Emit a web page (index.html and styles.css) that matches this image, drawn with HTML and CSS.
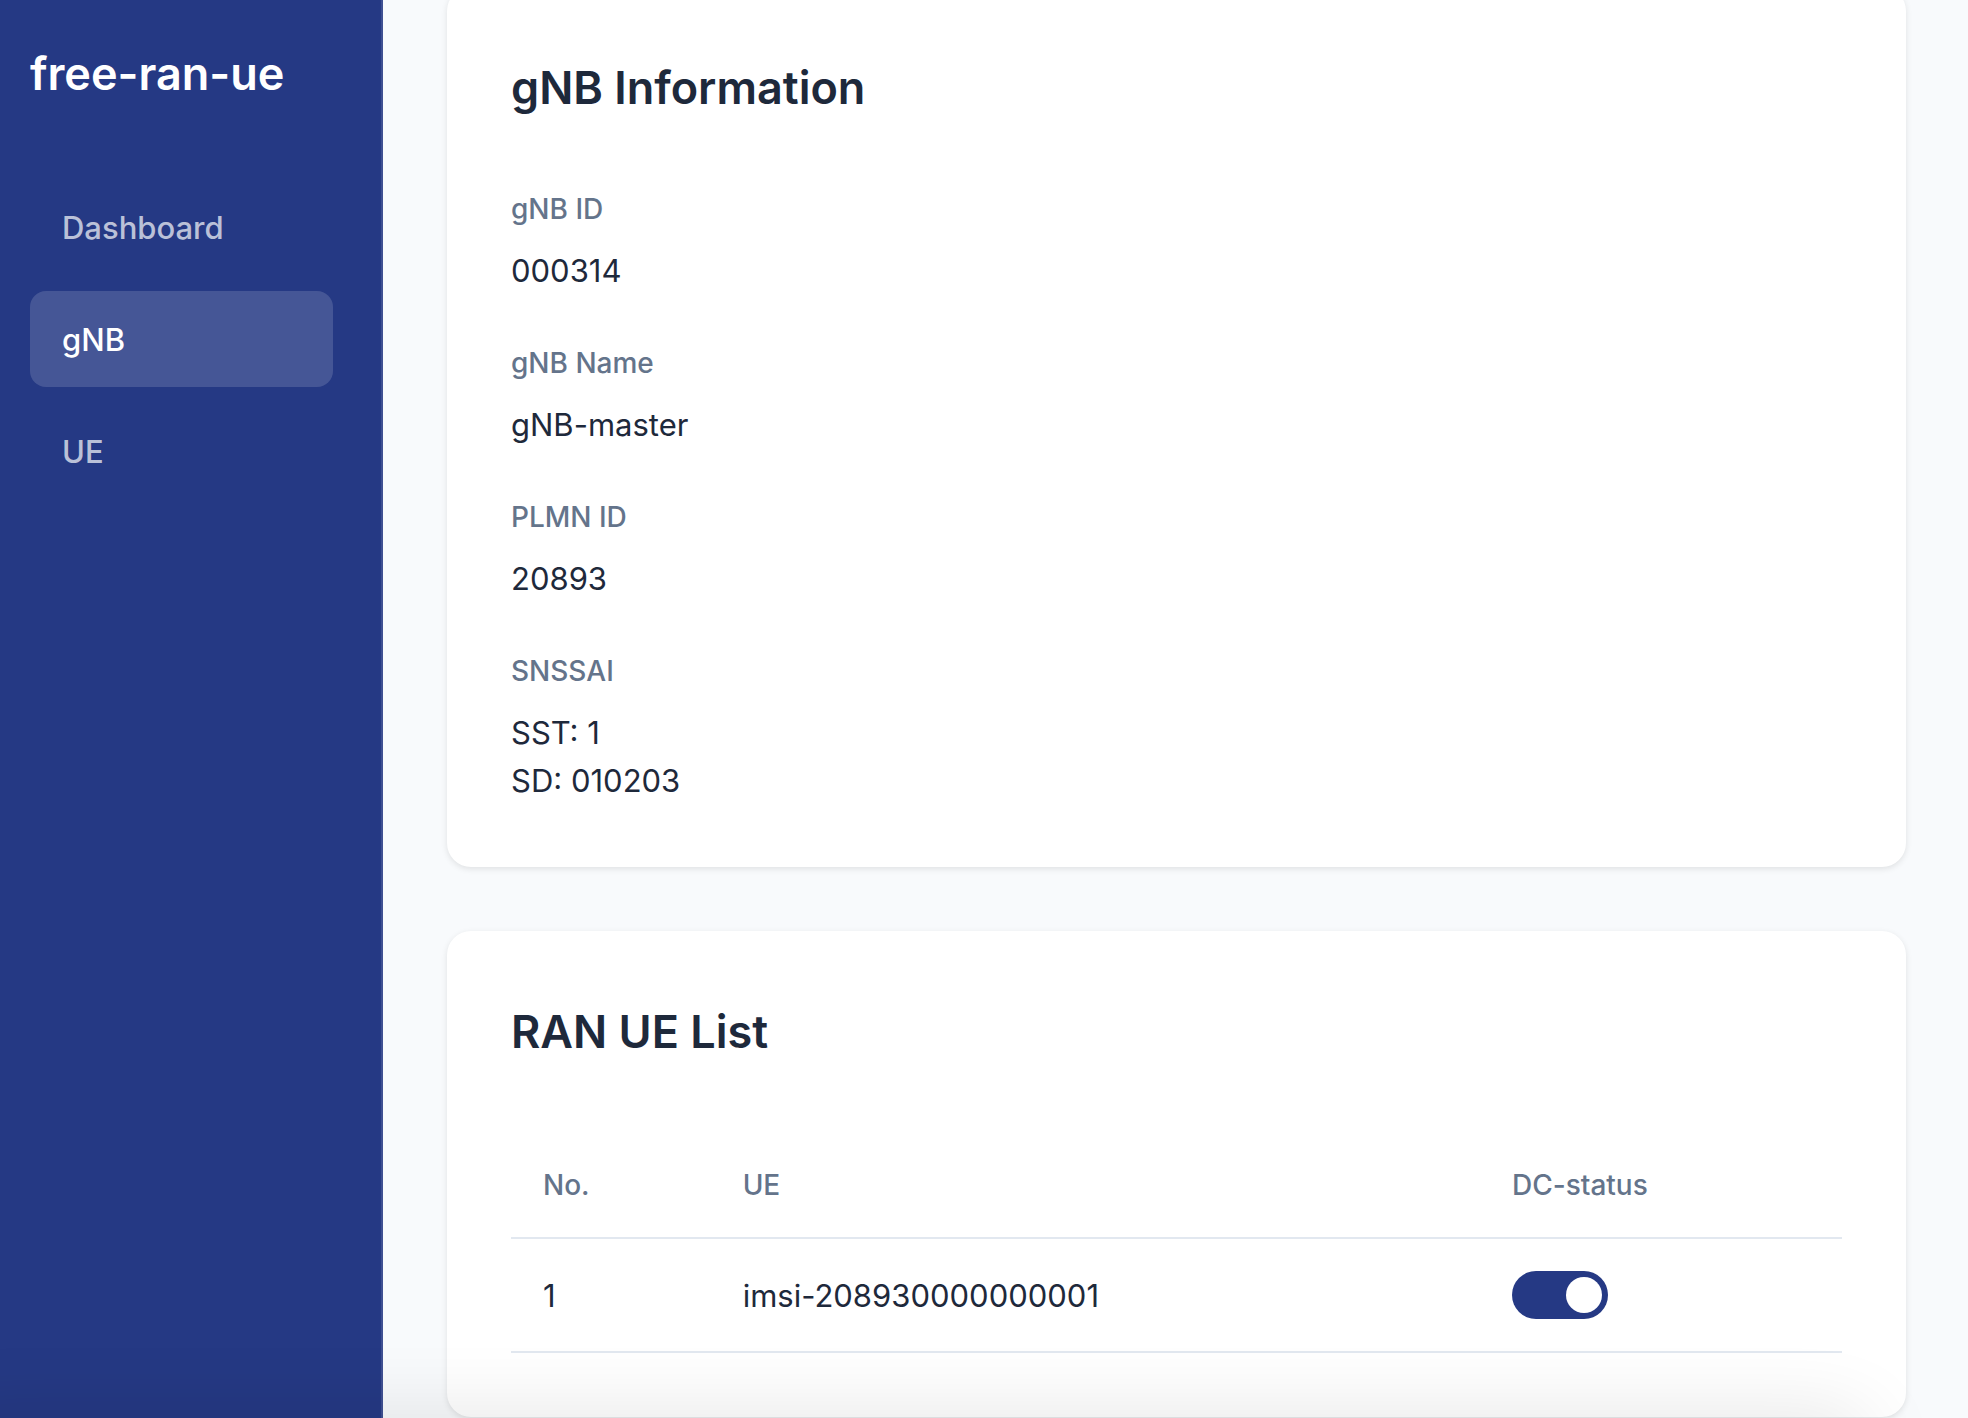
FILE: index.html
```html
<!DOCTYPE html>
<html lang="en">
<head>
  <meta charset="utf-8">
  <meta name="viewport" content="width=device-width, initial-scale=1">
  <title>free-ran-ue</title>
  <link rel="stylesheet" href="styles.css">
</head>
<body>
  <div class="shell">
    <aside class="sidebar">
      <div class="brand">free-ran-ue</div>
      <nav class="nav">
        <a class="nav-link" href="#dashboard">Dashboard</a>
        <a class="nav-link active" href="#gnb" aria-current="page">gNB</a>
        <a class="nav-link" href="#ue">UE</a>
      </nav>
    </aside>
    <main class="main">
      <section class="card">
        <h2 class="card-title">gNB Information</h2>
        <dl class="info">
          <div class="info-item"><dt>gNB ID</dt><dd>000314</dd></div>
          <div class="info-item"><dt>gNB Name</dt><dd>gNB-master</dd></div>
          <div class="info-item"><dt>PLMN ID</dt><dd>20893</dd></div>
          <div class="info-item"><dt>SNSSAI</dt><dd>SST: 1<br>SD: 010203</dd></div>
        </dl>
      </section>
      <section class="card">
        <h2 class="card-title">RAN UE List</h2>
        <table class="table">
          <thead>
            <tr>
              <th class="col-no" scope="col">No.</th>
              <th scope="col">UE</th>
              <th class="col-status" scope="col" id="dc-status">DC-status</th>
            </tr>
          </thead>
          <tbody>
            <tr>
              <td>1</td>
              <td>imsi-208930000000001</td>
              <td class="cell-control"><input class="toggle" type="checkbox" role="switch" aria-labelledby="dc-status" checked></td>
            </tr>
          </tbody>
        </table>
      </section>
    </main>
  </div>
  <div class="edge-shade"></div>
</body>
</html>
```
FILE: styles.css
```css
* {
  box-sizing: border-box;
}

body {
  margin: 0;
  background: #f8fafc;
  color: #1e293b;
  font-family: Inter, "Liberation Sans", sans-serif;
  font-size: 31px;
  line-height: 48px;
}

.shell {
  display: flex;
  height: 100vh;
  overflow: hidden;
}

/* Sidebar */
.sidebar {
  flex: none;
  width: 383px;
  padding: 38px 48px 0 30px;
  background: #253984;
  border-right: 2px solid #3f5092;
}

.brand {
  margin-bottom: 69px;
  color: #fff;
  font-size: 45px;
  font-weight: 600;
  line-height: 72px;
  white-space: nowrap;
}

.nav {
  display: flex;
  flex-direction: column;
  gap: 16px;
}

.nav-link {
  padding: 25px 32px 23px;
  border-radius: 16px;
  color: rgba(255, 255, 255, 0.7);
  font-weight: 500;
  text-decoration: none;
}

.nav-link.active {
  background: rgba(255, 255, 255, 0.15);
  color: #fff;
}

/* Content */
.main {
  flex: 1;
  display: flex;
  flex-direction: column;
  gap: 64px;
  min-width: 0;
  margin-top: -13px;
  padding: 0 62px 64px 64px;
}

.card {
  flex: none;
  padding: 65px 64px 62px;
  border-radius: 24px;
  background: #fff;
  box-shadow: 0 2px 6px rgba(0, 0, 0, 0.1);
}

.card-title {
  margin: 0 0 64px;
  font-size: 45px;
  font-weight: 600;
  line-height: 72px;
}

.info {
  display: flex;
  flex-direction: column;
  gap: 47px;
  margin: 0;
}

.info-item {
  display: flex;
  flex-direction: column;
  gap: 17px;
}

.info dt,
.table th {
  color: #64748b;
  font-size: 28px;
  font-weight: 500;
  line-height: 42px;
}

.info dd {
  margin: 0;
}

.table {
  width: 100%;
  margin-bottom: 2px;
  border-spacing: 0;
  table-layout: fixed;
}

.table th,
.table td {
  padding: 32px 32px 31px;
  border-bottom: 2px solid #e2e8f0;
  text-align: left;
}

.table td {
  padding-top: 33px;
}

.table .cell-control {
  padding: 32px;
}

.table .col-no {
  width: 15%;
}

.table .col-status {
  width: 362px;
}

.toggle {
  display: block;
  appearance: none;
  width: 96px;
  height: 48px;
  margin: 0;
  padding: 6px;
  border-radius: 24px;
  background: #cbd5e1;
}

.toggle::before {
  content: "";
  display: block;
  width: 36px;
  height: 36px;
  border-radius: 50%;
  background: #fff;
}

.toggle:checked {
  background: #253984;
}

.toggle:checked::before {
  margin-left: auto;
}

/* Soft shade along the bottom edge of the window */
.edge-shade {
  position: fixed;
  right: 100px;
  bottom: -60px;
  left: -60px;
  height: 60px;
  border-radius: 24px;
  box-shadow: 0 0 80px rgba(0, 0, 0, 0.12);
  pointer-events: none;
}
```
